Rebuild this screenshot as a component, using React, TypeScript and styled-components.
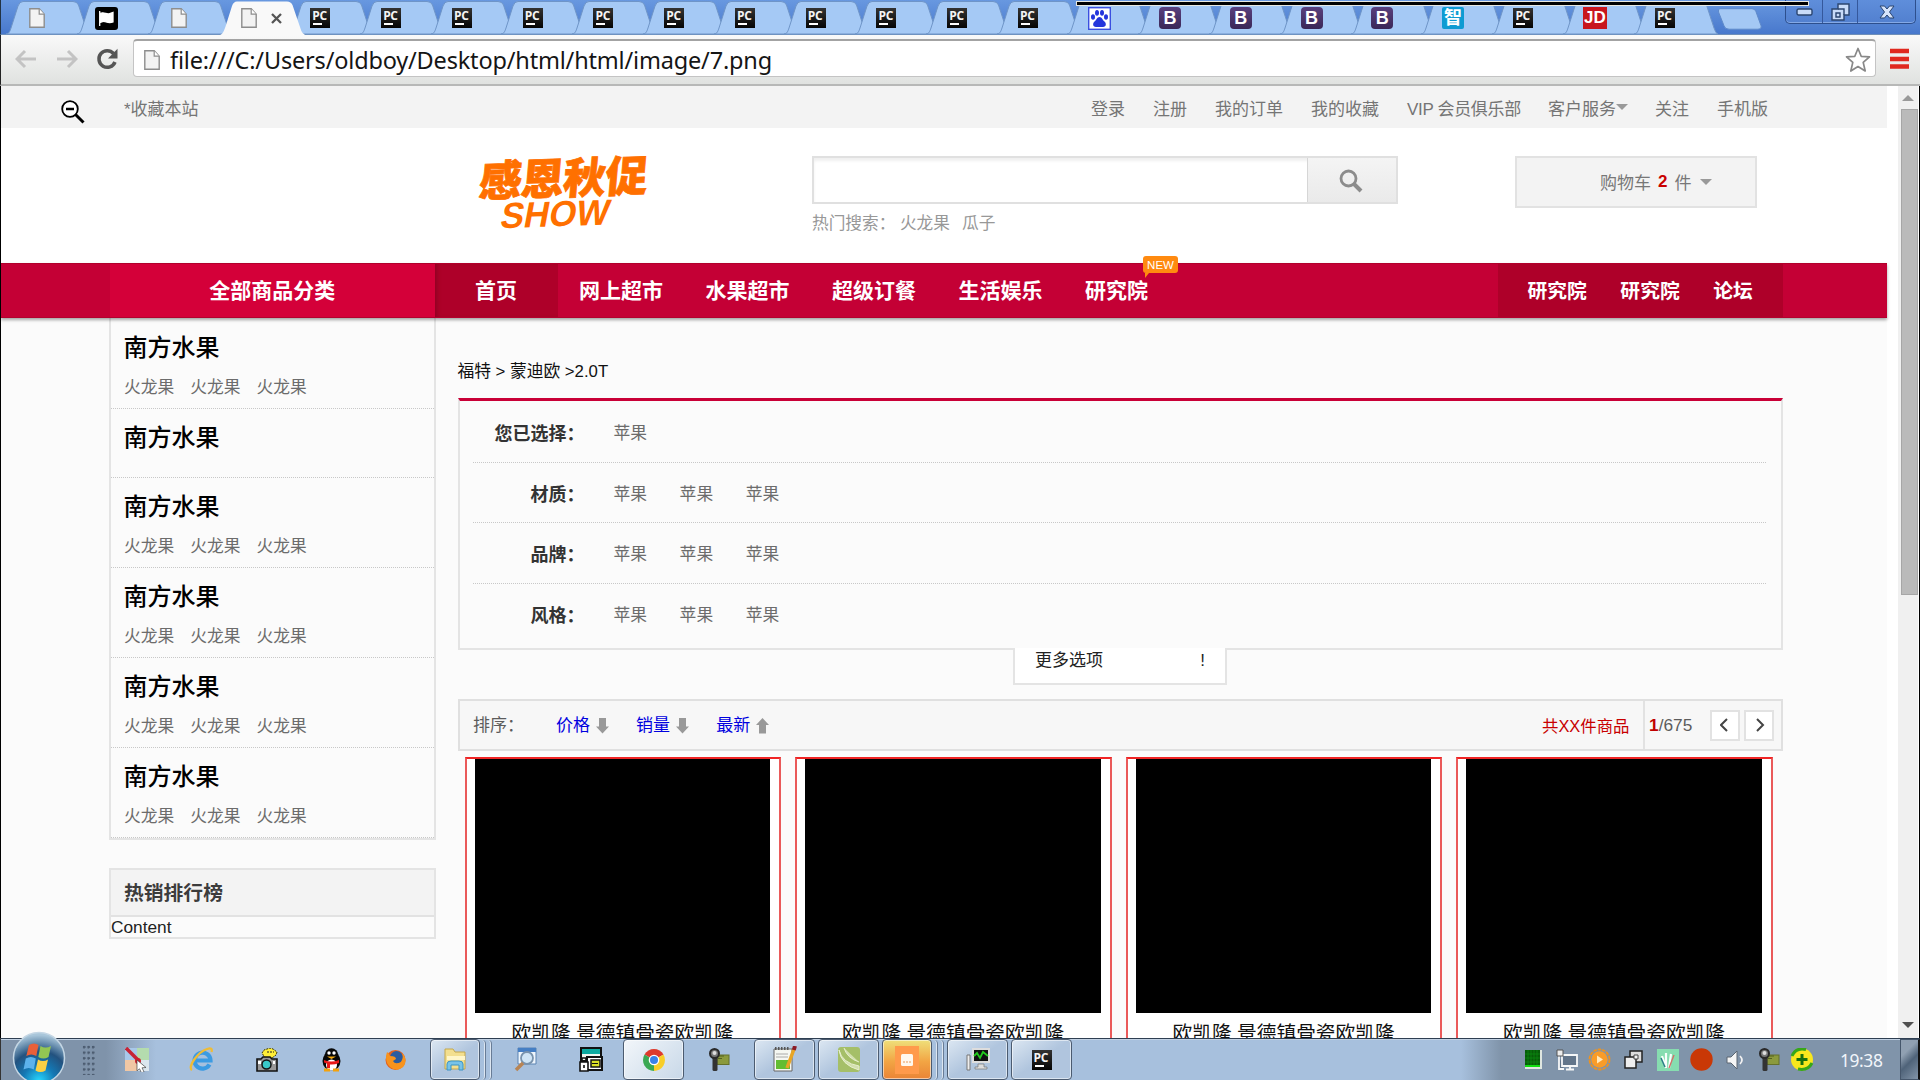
import React from "react";
import styled, { createGlobalStyle } from "styled-components";

const Global = createGlobalStyle`
  * { box-sizing: border-box; }
  body { margin: 0; overflow: hidden; background: #fff; }
  body, button, input { font-family: "Liberation Sans", "Noto Sans CJK SC", sans-serif; }
`;

const Screen = styled.div`
  width: 1920px;
  height: 1080px;
  display: flex;
  flex-direction: column;
  overflow: hidden;
  position: relative;
`;

/* ---------- browser chrome ---------- */

const TabStrip = styled.div`
  position: relative;
  height: 35px;
  flex: none;
  display: flex;
  align-items: flex-start;
  padding-left: 6px;
  background: linear-gradient(#6898e0, #4878cc);
  border-left: 1px solid #234;
  border-bottom: 1px solid #6f8fb8;
`;

const Tab = styled.div<{ $active?: boolean; $inset: number }>`
  position: relative;
  width: 70.78px;
  height: 35px;
  flex: none;
  display: flex;
  align-items: center;
  gap: 14px;
  padding: 1px 0 0 ${(p) => p.$inset}px;
  z-index: ${(p) => (p.$active ? 3 : 1)};
`;

const TabShape = styled.svg`
  position: absolute;
  left: 0;
  top: 0;
  overflow: visible;
  z-index: -1;
`;

const NewTab = styled.svg`
  margin: 8px 0 0 12px;
  flex: none;
`;

const Recording = styled.div`
  position: absolute;
  left: 1075px;
  top: 1px;
  width: 733px;
  height: 5px;
  background: #000;
  border: 1px solid #e8e8e0;
  z-index: 6;
`;

const WindowControls = styled.div`
  position: absolute;
  right: 4px;
  top: 0;
  height: 24px;
  display: grid;
  grid-template-columns: 36px 35px 58px;
  border: 1px solid #2d4f8d;
  border-top: 0;
  border-radius: 0 0 5px 5px;
  background: linear-gradient(#5f8edb, #5280cf);
  box-shadow: inset 0 -1px #84a9e6;
`;

const WindowButton = styled.div`
  display: flex;
  align-items: center;
  justify-content: center;
  & + & { border-left: 1px solid #35589c; }
`;

const Favicon = styled.span<{ $bg: string; $fg?: string; $size?: number; $round?: number; $w?: number }>`
  width: ${(p) => p.$w ?? 22}px;
  height: 22px;
  flex: none;
  display: flex;
  align-items: center;
  justify-content: center;
  border-radius: ${(p) => p.$round ?? 0}px;
  background: ${(p) => p.$bg};
  color: ${(p) => p.$fg ?? "#fff"};
  font: bold ${(p) => p.$size ?? 18}px/22px "Liberation Sans", "Noto Sans CJK SC", sans-serif;
`;

const PcBadge = styled.span`
  width: 20px;
  height: 20px;
  flex: none;
  display: flex;
  flex-direction: column;
  padding: 1px 0 0 2px;
  background: linear-gradient(#333, #050505);
  color: #f4f4f4;
  font: bold 12px/13px "Open Sans", sans-serif;
  letter-spacing: -0.3px;
  &::after {
    content: "";
    width: 9px;
    height: 2px;
    margin: 1px 0 0 1px;
    background: #fff;
  }
`;

const Toolbar = styled.div`
  height: 51px;
  flex: none;
  display: flex;
  align-items: center;
  padding: 0 11px 3px 14px;
  background: linear-gradient(#f9f9f9, #e0e2e0);
  border-left: 1px solid #222;
  border-bottom: 2px solid #b7b8b7;
`;

const ToolIcon = styled.svg<{ $gap: number }>`
  flex: none;
  margin: 2px ${(p) => p.$gap}px 0 0;
`;

const AddressBar = styled.div`
  height: 38px;
  flex: 1;
  display: flex;
  align-items: center;
  padding: 2px 4px 0 10px;
  background: #fff;
  border: 1px solid #c4c4c4;
  border-top: 2px solid #a3a3a3;
  border-radius: 4px;
`;

const Url = styled.span`
  flex: 1;
  margin-left: 10px;
  color: #151515;
  font: 23.5px/34px "Noto Sans", "Open Sans", sans-serif;
  letter-spacing: -0.18px;
  white-space: nowrap;
`;

const MenuIcon = styled.svg`
  margin-top: 2px;
`;

/* ---------- viewport ---------- */

const Viewport = styled.div`
  height: 952px;
  flex: none;
  display: flex;
  overflow: hidden;
  border-left: 1px solid #000;
  border-right: 1px solid #000;
  background: #fff;
`;

const Page = styled.div`
  width: 1886px;
  margin-right: 11px;
  flex: none;
  background: #fbfbfb;
  color: #666;
`;

const ScrollBar = styled.div`
  width: 20px;
  display: flex;
  flex-direction: column;
  align-items: center;
  padding: 9px 0 10px;
  background: #f0f0f0;
`;

const Thumb = styled.div`
  width: 17px;
  height: 486px;
  margin: 8px 0 auto 2px;
  background: #bababa;
  border: 1px solid #a6a6a6;
`;

const Caret = styled.span<{ $up?: boolean; $color?: string }>`
  display: inline-block;
  border: solid transparent;
  border-width: 0 6px;
  ${(p) => (p.$up ? "border-bottom" : "border-top")}: 6px solid ${(p) => p.$color ?? "#999"};
`;

const TopBar = styled.div`
  height: 42px;
  display: flex;
  align-items: center;
  padding: 5px 119px 0 60px;
  background: #f3f3f3;
  color: #757575;
  font-size: 17px;
  line-height: 20px;
`;

const ZoomCursor = styled.svg`
  flex: none;
  margin: 4px 39px 0 0;
`;

const TopLinks = styled.nav`
  margin-left: auto;
  display: flex;
  gap: 28px;
`;

const TopLink = styled.span`
  display: flex;
  align-items: flex-start;
  white-space: nowrap;
  ${Caret} { margin: 4px -1px 0 0; }
`;

const Vip = styled(TopLink)`
  width: 113px;
  letter-spacing: -0.33px;
`;

const Header = styled.header`
  height: 135px;
  display: flex;
  align-items: flex-start;
  padding: 28px 130px 0 477px;
  background: #fff;
`;

const Promo = styled.div`
  width: 172px;
  height: 76px;
  transform: rotate(-2deg) skewX(-7deg);
  color: #ff7000;
  font-weight: 900;
  white-space: nowrap;
  -webkit-text-stroke: 0.8px #ff7000;
`;

const PromoTitle = styled.div`
  font-size: 42.5px;
  line-height: 44px;
  margin-top: 2px;
  letter-spacing: -0.4px;
`;

const PromoShow = styled.div`
  display: inline-block;
  margin: -3px 0 0 25px;
  font: bold 36px/29px "Liberation Sans", sans-serif;
  transform: scaleX(0.97) skewX(-6deg);
  transform-origin: left;
  -webkit-text-stroke: 0;
`;

const SearchArea = styled.div`
  width: 586px;
  margin-left: 162px;
`;

const SearchBox = styled.div`
  height: 48px;
  display: grid;
  grid-template-columns: 1fr 89px;
  border: 2px solid #e0e0e0;
  box-shadow: inset 0 3px 3px #f0f0f0;
`;

const SearchButton = styled.div`
  display: flex;
  align-items: center;
  justify-content: center;
  padding: 2px 2px 0 0;
  border-left: 1px solid #d6d6d6;
  background: linear-gradient(#f4f4f4, #eaeaea);
`;

const HotWords = styled.div`
  display: flex;
  gap: 12px;
  margin-top: 10px;
  color: #989898;
  font-size: 16.7px;
  line-height: 20px;
  span:first-child { margin-right: -7.5px; }
`;

const Cart = styled.div`
  width: 242px;
  height: 52px;
  margin-left: auto;
  display: flex;
  align-items: center;
  gap: 7px;
  padding: 0 0 1px 83px;
  background: #f3f3f3;
  border: 2px solid #e2e2e2;
  color: #777;
  font-size: 17px;
  b { color: #c90000; }
  ${Caret} { margin-left: 2px; }
`;

const Nav = styled.nav`
  position: relative;
  z-index: 2;
  height: 55px;
  display: flex;
  padding: 0 104px 0 109px;
  background: #c40035;
  color: #fff;
  font-size: 21px;
  line-height: 54px;
  font-weight: 700;
  border-top: 1px solid #b1002b;
  border-bottom: 1px solid #b3002e;
  box-shadow: 0 2px 3px rgba(0, 0, 0, 0.35);
`;

const NavAll = styled.div`
  width: 324.5px;
  text-align: center;
  background: #d40039;
`;

const NavHome = styled.div`
  width: 123px;
  padding-left: 40.5px;
  background: #ae0029;
  box-shadow: inset 4px 0 4px -2px #8f0022;
`;

const NavLinks = styled.div`
  display: flex;
  gap: 42.5px;
  margin-left: 21.5px;
`;

const NavLink = styled.span`
  position: relative;
`;

const NewTag = styled.span`
  position: absolute;
  left: 58px;
  top: -8px;
  width: 35px;
  height: 17px;
  border-radius: 3px;
  background: #ff8a10;
  color: #fff;
  font: 11.5px/18px "Liberation Sans", sans-serif;
  text-align: center;
  &::after {
    content: "";
    position: absolute;
    left: 2px;
    bottom: -5px;
    border: solid transparent;
    border-width: 5px 4px 0 0;
    border-top-color: #ff8a10;
  }
`;

const NavRight = styled.div`
  width: 285px;
  margin-left: auto;
  display: flex;
  gap: 33.5px;
  padding-left: 29.5px;
  background: #ae0029;
  font-size: 19.8px;
`;

const Body = styled.div`
  display: flex;
  align-items: flex-start;
  padding: 0 104px 0 108px;
`;

const Sidebar = styled.aside`
  width: 327px;
  flex: none;
`;

const Categories = styled.div`
  height: 522px;
  padding-top: 1px;
  border: 2px solid #e4e4e4;
  border-top: 0;
`;

const Category = styled.section<{ $short?: boolean }>`
  height: ${(p) => (p.$short ? 69 : 90)}px;
  padding: 14px 0 0 12.5px;
  border-bottom: 1px dotted #c8c8c8;
`;

const CategoryTitle = styled.div`
  color: #000;
  font-size: 24px;
  line-height: 30px;
  font-weight: 500;
`;

const CategoryItems = styled.div`
  display: flex;
  gap: 15.9px;
  margin: 15px 0 0 0.5px;
  color: #6c6c6c;
  font-size: 16.8px;
  line-height: 20px;
`;

const HotList = styled.section`
  height: 71px;
  margin-top: 28px;
  border: 2px solid #e4e4e4;
`;

const HotTitle = styled.div`
  height: 47px;
  padding-left: 13px;
  background: #f3f3f3;
  border-bottom: 2px solid #e2e2e2;
  color: #3c3c3c;
  font-size: 19.8px;
  line-height: 47px;
  font-weight: 700;
`;

const HotBody = styled.div`
  color: #222;
  font-size: 17.3px;
  line-height: 20px;
`;

const Main = styled.main`
  width: 1326px;
  margin-left: 22px;
`;

const Crumbs = styled.div`
  display: flex;
  align-items: center;
  gap: 4.5px;
  height: 80px;
  margin-left: -0.5px;
  padding-top: 28px;
  color: #111;
  font-size: 16.8px;
  line-height: 20px;
`;

const Filters = styled.section`
  height: 252px;
  padding: 0 15px 0 13px;
  border: 2px solid #e4e4e4;
  border-top: 3px solid #c90037;
`;

const FilterRow = styled.div`
  display: flex;
  height: 60.5px;
  padding-top: 22px;
  line-height: 20px;
  color: #6c6c6c;
  font-size: 16.8px;
  &:first-child { padding-top: 23px; }
  & + & { border-top: 1px dotted #c8c8c8; }
`;

const FilterLabel = styled.b`
  width: 111.5px;
  margin-right: 29px;
  text-align: right;
  color: #333;
  font-size: 18px;
  font-weight: 700;
`;

const FilterValue = styled.span`
  width: 66.1px;
`;

const More = styled.div`
  position: relative;
  z-index: 1;
  width: 214px;
  height: 37px;
  margin: -2px 0 14px 555px;
  display: flex;
  justify-content: space-between;
  padding: 3px 20px 0 20px;
  background: #fff;
  border: 2px solid #e4e4e4;
  border-top: 0;
  color: #222;
  font-size: 17px;
  line-height: 20px;
`;

const SortBar = styled.div`
  height: 52px;
  display: flex;
  align-items: center;
  padding: 0 7px 0 13px;
  background: #f7f7f7;
  border: 2px solid #e0e0e0;
  color: #5c5c5c;
  font-size: 17px;
  line-height: 20px;
`;

const SortLabel = styled.span`
  width: 83px;
  padding-top: 2px;
`;

const SortKey = styled.span`
  width: 80.1px;
  display: flex;
  align-items: center;
  gap: 6px;
  padding-top: 2px;
  color: #0000df;
`;

const Total = styled.span`
  width: 101px;
  margin-left: auto;
  padding-top: 1px;
  color: #c80000;
  font-size: 16.4px;
`;

const PageCount = styled.span`
  width: 63px;
  height: 100%;
  padding-left: 4px;
  border-left: 2px solid #e2e2e2;
  line-height: 48px;
  font-size: 17.3px;
  b { color: #c00000; }
`;

const Pager = styled.span`
  width: 30px;
  height: 31px;
  margin-left: 4px;
  display: flex;
  align-items: center;
  justify-content: center;
  background: #fff;
  border: 2px solid #e2e2e2;
`;

const Products = styled.div`
  display: flex;
  gap: 14.3px;
  margin: 7px 0 0 7px;
`;

const Product = styled.article`
  width: 316.2px;
  height: 300px;
  flex: none;
  border: 2px solid #ea5a5a;
  border-top-color: #f02424;
  margin-top: -1px;
  padding: 0 9px 0 8px;
  background: #fff;
  color: #111;
  font-size: 19.7px;
  line-height: 32px;
  text-align: center;
  white-space: nowrap;
`;

const Photo = styled.div`
  height: 254px;
  margin-bottom: 4px;
  background: #000;
`;

/* ---------- taskbar ---------- */

const TaskBar = styled.footer`
  position: relative;
  height: 42px;
  flex: none;
  display: flex;
  align-items: center;
  background: linear-gradient(90deg, #7f93aa 0 105px, #a7c0dd 155px 1460px, #8094aa 1500px);
  border-top: 1px solid #2f3f52;
  border-left: 1px solid #333;
  box-shadow: inset 0 1px #c2d2e4;
`;

const Orb = styled.svg`
  position: absolute;
  left: 11px;
  top: -8px;
`;

const Slot = styled.div<{ $w: number }>`
  width: ${(p) => p.$w}px;
  height: 41px;
  flex: none;
  display: flex;
  align-items: center;
  justify-content: center;
`;

const TaskButton = styled(Slot)<{ $tone?: "orange" | "light"; $before?: number }>`
  height: 41px;
  margin: 0 0 0 ${(p) => p.$before ?? 3}px;
  border: 1.5px solid #4b5b70;
  border-radius: 4px;
  box-shadow: inset 0 0 0 1px rgba(255, 255, 255, 0.55);
  background: ${(p) =>
    p.$tone === "orange"
      ? "linear-gradient(#efe07a, #f2a544 55%, #ea8436)"
      : p.$tone === "light"
        ? "linear-gradient(135deg, #f2f6fa, #c8d8e8)"
        : "linear-gradient(145deg, #dce7f2, #b0c5de 50%)"};
`;

const Stack = styled.span`
  width: 6px;
  height: 40px;
  border-right: 1px solid #687c96;
  box-shadow: inset -1px 0 rgba(255, 255, 255, 0.6);
  border-radius: 0 4px 4px 0;
`;

const Grip = styled.div`
  width: 13px;
  height: 30px;
  margin-left: 81px;
  background: radial-gradient(circle at 2px 2px, #4c5c70 1.2px, transparent 1.6px) 0 0 / 4.5px 5.6px;
`;

const Tray = styled.div`
  margin-left: auto;
  display: flex;
  align-items: center;
`;

const Clock = styled.span`
  width: 78px;
  padding-left: 18px;
  color: #f2f6fa;
  font: 17.4px/24px "Noto Sans", sans-serif;
  letter-spacing: -0.4px;
`;

const ShowDesktop = styled.div`
  width: 20px;
  height: 41px;
  border: 1.5px solid #45566b;
  border-right: 2px solid #111;
  background: linear-gradient(135deg, #90a0b2 30%, #4f6379 55%, #8395a9);
`;

/* ---------- drawings ---------- */

const PageIcon = () => (
  <svg width="16" height="20" viewBox="0 0 16 20">
    <path d="M.8.8h9.4l5 5.4v13H.8z" fill="#f3f3f3" stroke="#8d8d8d" strokeWidth="1.4" />
    <path d="M10.2.8v5.4h5" fill="#fff" stroke="#8d8d8d" strokeWidth="1.2" />
  </svg>
);

const FlagIcon = () => (
  <svg width="23" height="23" viewBox="0 0 23 23">
    <rect width="23" height="23" rx="3" fill="#000" />
    <path d="M4.700 4v15M5 6.500c4-2 6 1 9 .3l4-1.300v9.500c-5 2-7-1-10-.500l-3 1z" fill="#fff" stroke="#fff" strokeWidth="1.300" />
  </svg>
);

const PawIcon = () => (
  <svg width="23" height="23" viewBox="0 0 23 23">
    <rect x=".7" y=".7" width="21.600" height="21.600" fill="#fff" stroke="#3b4fe0" strokeWidth="1.4" />
    <g fill="#2436dc">
      <ellipse cx="5" cy="10" rx="2" ry="2.800" />
      <ellipse cx="9" cy="5.800" rx="2" ry="2.900" />
      <ellipse cx="14" cy="5.800" rx="2" ry="2.900" />
      <ellipse cx="18" cy="10" rx="2" ry="2.800" />
      <path d="M11.500 10c2.500 0 3 3 5 4.500s2 5.500-1.500 5.500h-7c-3.500 0-3.500-4-1.500-5.500s2.500-4.500 5-4.500z" />
    </g>
  </svg>
);

const RecorderIcon = () => (
  <svg width="22" height="24" viewBox="0 0 22 24">
    <rect x="9" y="7" width="12" height="9.500" fill="#8b9a3d" stroke="#65712c" />
    <path d="M10 8h6M10 10.500h4" stroke="#556022" />
    <rect x="4.500" y="8" width="5" height="15" rx="1.500" fill="#333" />
    <circle cx="6.500" cy="5.500" r="4.500" fill="#777" stroke="#292929" strokeWidth="2" />
    <circle cx="6.500" cy="5" r="2" fill="#ddd" />
  </svg>
);

const Arrow = ({ up }: { up?: boolean }) => (
  <svg width="13" height="16" viewBox="0 0 13 16">
    <path d={up ? "M6.500 0l6.500 7h-3v8.500h-7V7H0z" : "M3 0h7v8.500h3l-6.500 7-6.500-7h3z"} fill="#999" />
  </svg>
);

const Chevron = ({ right }: { right?: boolean }) => (
  <svg width="11" height="14" viewBox={right ? "-1 0 11 14" : "1 0 11 14"}>
    <path d={right ? "M2 1l6 6-6 6" : "M8 1L2 7l6 6"} fill="none" stroke="#444" strokeWidth="2" />
  </svg>
);

type TabKind = "page" | "flag" | "active" | "pc" | "paw" | "b" | "zhi" | "jd";

const tabs: TabKind[] = [
  "page", "flag", "page", "active",
  "pc", "pc", "pc", "pc", "pc", "pc", "pc", "pc", "pc", "pc", "pc",
  "paw", "b", "b", "b", "b", "zhi", "pc", "jd", "pc",
];

const insets: Record<TabKind, number> = {
  page: 22, active: 22, flag: 17.5, pc: 20.3, paw: 19.5, b: 19.8, zhi: 19.8, jd: 19,
};

const TabIcon = ({ kind }: { kind: TabKind }) => {
  switch (kind) {
    case "flag": return <FlagIcon />;
    case "paw": return <PawIcon />;
    case "b": return <Favicon $bg="linear-gradient(#59407e,#3a2757)" $round={4}>B</Favicon>;
    case "zhi": return <Favicon $bg="#0e9bd2" $round={2} $size={18}>智</Favicon>;
    case "jd": return <Favicon $bg="#c8161d" $size={17} $w={24}>JD</Favicon>;
    case "pc": return <PcBadge>PC</PcBadge>;
    default: return <PageIcon />;
  }
};

const BrowserTab = ({ kind }: { kind: TabKind }) => {
  const active = kind === "active";
  return (
    <Tab $active={active} $inset={insets[kind]}>
      <TabShape width="84" height="35">
        <path
          d={active
            ? "M-1 35.500C4 35 5 31 7 25L13 6Q14.500 1.500 18 1.500H68Q72 1.500 73.500 5L81 27Q83 35 88 35.500Z"
            : "M-1 34C2 34 3 31 4 28L11 6Q12.500 1.500 16 1.500H66Q70 1.500 71.500 5L79 28Q81 34 83 34Z"}
          fill={active ? "#f9f9f9" : "#a5c9f5"}
          stroke={active ? "none" : "#6f95c8"}
          strokeWidth="1"
        />
      </TabShape>
      <TabIcon kind={kind} />
      {active && (
        <svg width="11" height="11" viewBox="0 0 11 11">
          <path d="M1 1l9 9M10 1l-9 9" stroke="#555" strokeWidth="2.300" />
        </svg>
      )}
    </Tab>
  );
};

const categories = [true, false, true, true, true, true];
const filters = [
  { label: "您已选择：", values: 1 },
  { label: "材质：", values: 3 },
  { label: "品牌：", values: 3 },
  { label: "风格：", values: 3 },
];
const repeat = (n: number) => Array.from({ length: n }, (_, i) => i);

const Chrome = () => (
  <>
    <TabStrip>
      {tabs.map((kind, i) => <BrowserTab key={i} kind={kind} />)}
      <NewTab width="46" height="22" viewBox="0 0 46 22">
        <path d="M3 .7h32q3 0 4 3l5 14q1 3-3 3.500H12q-4 0-5-3.500L1.500 4Q.8.700 3 .7z" fill="#a4c8f4" stroke="#5f8aca" />
      </NewTab>
      <WindowControls>
        <WindowButton>
          <svg width="17" height="8"><rect x="1" y="1" width="15" height="6" rx="1.500" fill="#c8dbf8" stroke="#2b456f" strokeWidth="1.400" /></svg>
        </WindowButton>
        <WindowButton>
          <svg width="19" height="18" viewBox="0 0 19 18">
            <path d="M7 1h11v11h-5v5H1V6h6z" fill="#c8dbf8" stroke="#2b456f" strokeWidth="1.400" />
            <path d="M7 6h6v6M5 10h4v4H5z" fill="none" stroke="#2b456f" strokeWidth="1.400" />
          </svg>
        </WindowButton>
        <WindowButton>
          <svg width="16" height="14" viewBox="0 0 16 14">
            <path d="M1 1h4.500L8 4l2.500-3H15l-4.500 6 4.500 6h-4.500L8 10l-2.500 3H1l4.500-6z" fill="#d6e3fa" stroke="#2b456f" />
          </svg>
        </WindowButton>
      </WindowControls>
      <Recording />
    </TabStrip>
    <Toolbar>
      <ToolIcon $gap={19} width="22" height="20" viewBox="0 0 22 20"><path d="M21 10H3M10 2L2 10l8 8" fill="none" stroke="#c3c3c3" strokeWidth="3" /></ToolIcon>
      <ToolIcon $gap={18} width="22" height="20" viewBox="0 0 22 20"><path d="M1 10h18M12 2l8 8-8 8" fill="none" stroke="#c3c3c3" strokeWidth="3" /></ToolIcon>
      <ToolIcon $gap={15} width="22" height="22" viewBox="0 0 22 22">
        <path d="M17.500 5.500A8.300 8.300 0 1 0 19 14" fill="none" stroke="#555" strokeWidth="3.500" />
        <path d="M21.500.8v9.700H12z" fill="#555" />
      </ToolIcon>
      <AddressBar>
        <PageIcon />
        <Url>file:///C:/Users/oldboy/Desktop/html/html/image/7.png</Url>
        <svg width="26" height="26" viewBox="0 0 26 26">
          <path d="M13 1.500l3.200 7.800 8.300.6-6.300 5.500 2 8.600L13 19.500 5.800 24l2-8.600L1.500 9.900l8.300-.6z" fill="#fff" stroke="#888" strokeWidth="1.700" strokeLinejoin="round" />
        </svg>
      </AddressBar>
      <MenuIcon width="33" height="22" viewBox="0 0 33 22">
        <path d="M14 3h19M14 11h19M14 18.500h19" stroke="#e0291f" strokeWidth="4.400" />
      </MenuIcon>
    </Toolbar>
  </>
);

const Site = () => (
  <Page>
    <TopBar>
      <ZoomCursor width="24" height="24" viewBox="0 0 24 24">
        <circle cx="9" cy="9" r="7.800" fill="#fff" stroke="#000" strokeWidth="1.800" />
        <path d="M5 9h8" stroke="#000" strokeWidth="2.500" />
        <path d="M14.500 14.500l8 8" stroke="#000" strokeWidth="3" />
      </ZoomCursor>
      <span>*收藏本站</span>
      <TopLinks>
        <TopLink>登录</TopLink>
        <TopLink>注册</TopLink>
        <TopLink>我的订单</TopLink>
        <TopLink>我的收藏</TopLink>
        <Vip>VIP 会员俱乐部</Vip>
        <TopLink>客户服务<Caret /></TopLink>
        <TopLink>关注</TopLink>
        <TopLink>手机版</TopLink>
      </TopLinks>
    </TopBar>
    <Header>
      <Promo>
        <PromoTitle>感恩秋促</PromoTitle>
        <PromoShow>SHOW</PromoShow>
      </Promo>
      <SearchArea>
        <SearchBox>
          <span />
          <SearchButton>
            <svg width="24" height="24" viewBox="0 0 24 24">
              <circle cx="9.500" cy="9.500" r="7.500" fill="none" stroke="#8c8c8c" strokeWidth="2.800" />
              <path d="M14.500 14.500l7.500 7.500" stroke="#8c8c8c" strokeWidth="4" />
            </svg>
          </SearchButton>
        </SearchBox>
        <HotWords><span>热门搜索：</span><span>火龙果</span><span>瓜子</span></HotWords>
      </SearchArea>
      <Cart><span>购物车</span><b>2</b><span>件</span><Caret /></Cart>
    </Header>
    <Nav>
      <NavAll>全部商品分类</NavAll>
      <NavHome>首页</NavHome>
      <NavLinks>
        <NavLink>网上超市</NavLink>
        <NavLink>水果超市</NavLink>
        <NavLink>超级订餐</NavLink>
        <NavLink>生活娱乐</NavLink>
        <NavLink>研究院<NewTag>NEW</NewTag></NavLink>
      </NavLinks>
      <NavRight><span>研究院</span><span>研究院</span><span>论坛</span></NavRight>
    </Nav>
    <Body>
      <Sidebar>
        <Categories>
          {categories.map((full, i) => (
            <Category key={i} $short={!full}>
              <CategoryTitle>南方水果</CategoryTitle>
              {full && <CategoryItems>{repeat(3).map((n) => <span key={n}>火龙果</span>)}</CategoryItems>}
            </Category>
          ))}
        </Categories>
        <HotList>
          <HotTitle>热销排行榜</HotTitle>
          <HotBody>Content</HotBody>
        </HotList>
      </Sidebar>
      <Main>
        <Crumbs><span>福特</span><span>&gt;</span><span>蒙迪欧</span><span>&gt;2.0T</span></Crumbs>
        <Filters>
          {filters.map((f) => (
            <FilterRow key={f.label}>
              <FilterLabel>{f.label}</FilterLabel>
              {repeat(f.values).map((n) => <FilterValue key={n}>苹果</FilterValue>)}
            </FilterRow>
          ))}
        </Filters>
        <More><span>更多选项</span><span>!</span></More>
        <SortBar>
          <SortLabel>排序：</SortLabel>
          <SortKey>价格<Arrow /></SortKey>
          <SortKey>销量<Arrow /></SortKey>
          <SortKey>最新<Arrow up /></SortKey>
          <Total>共XX件商品</Total>
          <PageCount><b>1</b>/675</PageCount>
          <Pager><Chevron /></Pager>
          <Pager><Chevron right /></Pager>
        </SortBar>
        <Products>
          {repeat(4).map((n) => (
            <Product key={n}><Photo />欧凯隆 景德镇骨瓷欧凯隆</Product>
          ))}
        </Products>
      </Main>
    </Body>
  </Page>
);

const Task = () => (
  <TaskBar>
    <Orb width="54" height="52" viewBox="0 0 54 52">
      <defs>
        <radialGradient id="orb" cx=".5" cy=".95" r=".9">
          <stop offset="0" stopColor="#27d8ff" />
          <stop offset=".35" stopColor="#1478b4" />
          <stop offset=".65" stopColor="#23527f" />
          <stop offset="1" stopColor="#a9c6da" />
        </radialGradient>
      </defs>
      <circle cx="27" cy="27" r="25.500" fill="url(#orb)" stroke="#c4d6e4" strokeWidth="1.500" />
      <path d="M17 14q5-3 9.500 0l-2.200 11q-5-3-10 0z" fill="#e8603a" />
      <path d="M28.500 15q5 3 10.500 0l-2.500 11q-5 3-10.200 0z" fill="#93c653" />
      <path d="M13.800 27.500q5-3 10 0l-2 11q-5-3-10.300 0z" fill="#5cb2ec" />
      <path d="M26 28.500q5 3 10 0l-2.500 11q-5 3-10 0z" fill="#fbd044" />
    </Orb>
    <Grip />
    <Slot $w={85}>
      <svg width="25" height="25" viewBox="0 0 25 25">
        <path d="M0 1h12v12H0z" fill="#a8c8ea" /><path d="M12 1h12v12H12z" fill="#b4dcae" />
        <path d="M0 13h12v11H0z" fill="#f0c7a4" /><path d="M12 13h12v11H12z" fill="#dbe6ee" />
        <path d="M1 1l12 12" stroke="#c62436" strokeWidth="3.500" /><circle cx="13" cy="14" r="3" fill="#d0202c" />
        <path d="M12 13l9 7.500-4 .3 2 4-2.500 1-2-4-2.500 2z" fill="#fff" stroke="#444" strokeWidth=".7" />
      </svg>
    </Slot>
    <Slot $w={43}>
      <svg width="25" height="25" viewBox="0 0 25 25">
        <path d="M20.500 17.500a8 8 0 1 1 1-4H6" fill="none" stroke="#3c9be2" strokeWidth="4.200" />
        <path d="M3 23C-2 20 9 5 18 2q6-2 4.500 3" fill="none" stroke="#efbc36" strokeWidth="2.300" />
      </svg>
    </Slot>
    <Slot $w={88}>
      <svg width="22" height="24" viewBox="0 0 22 24">
        <path d="M6 5l2-3 3-1 3-1 3 1 4 3-1 3-4 3H9z" fill="#ffee37" stroke="#3b3500" strokeDasharray="2 1" />
        <path d="M11 4h7" stroke="#222" strokeDasharray="2 1" />
        <path d="M1 11h4l2-2h7l2 2h5v12H1z" fill="#999" stroke="#111" strokeWidth="1.600" />
        <circle cx="10.500" cy="16.500" r="4.500" fill="#39c8c8" stroke="#111" strokeWidth="1.500" />
        <path d="M2 13h3v3H2zM17 13h2v3h-2z" fill="#fff" />
      </svg>
    </Slot>
    <Slot $w={40}>
      <svg width="23" height="24" viewBox="0 0 23 24">
        <ellipse cx="11.500" cy="13" rx="9" ry="9.500" fill="#080808" />
        <circle cx="11.500" cy="7" r="6.700" fill="#080808" />
        <ellipse cx="11.500" cy="17" rx="5.500" ry="5.500" fill="#fff" />
        <circle cx="9" cy="5" r="1.700" fill="#fff" /><circle cx="14" cy="5" r="1.700" fill="#fff" />
        <path d="M7 8.500h9l-4.500 2.500z" fill="#f8aa0b" />
        <path d="M4 12q7 3 15 0v3q-5 2-9 1.500V20H7v-4.500l-3-1z" fill="#e81818" />
        <path d="M4 22h6M13 22h6" stroke="#f3a10b" strokeWidth="3" />
      </svg>
    </Slot>
    <Slot $w={88}>
      <svg width="23" height="24" viewBox="0 0 23 24">
        <circle cx="11.500" cy="12" r="10" fill="#e6601b" />
        <circle cx="12.500" cy="9.500" r="6.500" fill="#2a5ca0" />
        <path d="M3 4q2 1 3 4 6 0 6 3l-3 2q2 4 8 1 3-4 1-9 6 6 2 13-7 7-14 1Q0 13 3 4z" fill="#f7931d" />
      </svg>
    </Slot>
    <TaskButton $w={50} $before={-9}>
      <svg width="24" height="25" viewBox="0 0 24 25">
        <path d="M2 2h8l2 3h10v17H2z" fill="#f3df8f" stroke="#c4a84c" />
        <path d="M4 9h18v4H4z" fill="#fff6c9" />
        <path d="M4 23v-6q0-3 4-3h8q4 0 4 3v6h-4v-5H8v5z" fill="#78c3e8" stroke="#3c94c4" />
      </svg>
    </TaskButton>
    <Stack /><Stack />
    <Slot $w={67}>
      <svg width="24" height="25" viewBox="0 0 24 25">
        <path d="M4 1h18v16H4z" fill="#eff6fc" stroke="#5a83b2" /><path d="M4 1h18v4H4z" fill="#467fc4" />
        <circle cx="13" cy="11" r="6" fill="#cfe5f6" stroke="#7993ad" strokeWidth="1.800" />
        <path d="M9 16l-7 7" stroke="#b88454" strokeWidth="3.500" />
      </svg>
    </Slot>
    <Slot $w={63}>
      <svg width="24" height="25" viewBox="0 0 24 25">
        <path d="M2 1h20v13H2z" fill="#edf5ee" stroke="#111" strokeWidth="2" /><path d="M3 2h18v5H3z" fill="#0caaa0" />
        <path d="M8 10h15v13H8z" fill="#fff" stroke="#111" strokeWidth="2" /><path d="M12 13h9v7h-9z" fill="#d9df28" stroke="#111" strokeWidth="1.500" /><path d="M13 16.500h6" stroke="#111" />
        <path d="M1 15h8v9H1z" fill="#fff" stroke="#111" strokeWidth="1.600" /><path d="M3 15v-4h4v4M5 18v3" fill="none" stroke="#111" strokeWidth="1.600" />
      </svg>
    </Slot>
    <TaskButton $w={61} $before={1} $tone="light">
      <svg width="24" height="24" viewBox="0 0 24 24">
        <path d="M12 12L2.500 6.500A11 11 0 0 1 21.500 6.500z" fill="#dd3a2c" />
        <path d="M12 12l9.500-5.500A11 11 0 0 1 12 23z" fill="#f8ce28" />
        <path d="M12 12v11A11 11 0 0 1 2.500 6.500z" fill="#3aa853" />
        <circle cx="12" cy="12" r="5.300" fill="#fff" /><circle cx="12" cy="12" r="4" fill="#3982e8" />
      </svg>
    </TaskButton>
    <Slot $w={70}><RecorderIcon /></Slot>
    <TaskButton $w={61} $before={0}>
      <svg width="24" height="27" viewBox="0 0 24 27">
        <path d="M1 3h18v22H1z" fill="#f5f7f2" stroke="#666" /><path d="M3 14h14v9H3z" fill="#63bd31" />
        <path d="M2 2.500h15" stroke="#555" strokeWidth="3" strokeDasharray="1.500 1.500" />
        <path d="M3 8h12M3 11h12" stroke="#aaa" /><path d="M21 3l-7 19" stroke="#e7a525" strokeWidth="3.500" /><path d="M22 0l-1.200 4" stroke="#8b1c28" strokeWidth="4" />
      </svg>
    </TaskButton>
    <TaskButton $w={61}>
      <svg width="22" height="25" viewBox="0 0 22 25">
        <rect width="22" height="25" rx="3" fill="#a5bf68" />
        <path d="M1 3q3 13 20 16v4Q3 18 1 3zM6 1q3 10 15 14" fill="#d3e0ae" stroke="#e7efcf" strokeWidth="1" />
      </svg>
    </TaskButton>
    <TaskButton $w={50} $tone="orange">
      <svg width="24" height="28" viewBox="0 0 24 28">
        <rect width="24" height="28" fill="#ff9a4b" /><rect x="6" y="8" width="12" height="12" rx="1.500" fill="#fff8ed" />
        <path d="M8 16h2M11 16h2M14 16h2" stroke="#e99a59" />
      </svg>
    </TaskButton>
    <Stack /><Stack />
    <TaskButton $w={61}>
      <svg width="24" height="25" viewBox="0 0 24 25">
        <path d="M1 8h3v15H1z" fill="#eee" stroke="#777" /><path d="M7 2h16v13H7z" fill="#111" stroke="#ddd" strokeWidth="2" />
        <path d="M8 9l3-3 3 5 3-6 5 4" stroke="#22c91d" strokeWidth="1.800" fill="none" /><path d="M12 17h6v3h3v2H9v-2h3z" fill="#ddd" stroke="#777" strokeWidth=".7" />
      </svg>
    </TaskButton>
    <TaskButton $w={61}><PcBadge>PC</PcBadge></TaskButton>
    <Tray>
      <Slot $w={39}>
        <svg width="17" height="19"><path d="M0 0h17v19H0z" fill="#dfe6e0" /><path d="M0 0h15v17H0z" fill="#075c08" /><path d="M0 16h15" stroke="#10df10" strokeWidth="2" /><path d="M3 0v15M6 0v15M9 0v15M12 0v15M0 4h15M0 8h15M0 12h15" stroke="#0c8c12" strokeWidth=".7" /></svg>
      </Slot>
      <Slot $w={27}>
        <svg width="22" height="22" viewBox="0 0 22 22"><path d="M6 6h15v11H6zM10 20.500h8M14 17v3M3 7v13h5" fill="#62758a" stroke="#f5f7f8" strokeWidth="1.800" /><path d="M1 1h6v6H1z" fill="#eee" stroke="#555" /></svg>
      </Slot>
      <Slot $w={39}>
        <svg width="23" height="23" viewBox="0 0 23 23"><circle cx="11.500" cy="11.500" r="10" fill="none" stroke="#f0931d" strokeWidth="1.800" strokeDasharray="3.500 1" /><circle cx="11.500" cy="11.500" r="8.200" fill="#f99c28" /><path d="M9 7.500l6 4-6 4z" fill="#ffe9bd" /></svg>
      </Slot>
      <Slot $w={29}>
        <svg width="20" height="20" viewBox="0 0 20 20"><path d="M6 1h12v11H6z" fill="#ddd" stroke="#222" strokeWidth="1.500" /><path d="M1 7h11v11H1z" fill="#eee" stroke="#222" strokeWidth="1.500" /><path d="M10 5h4v4h-4z" fill="#f5f5f5" stroke="#444" /></svg>
      </Slot>
      <Slot $w={39}>
        <svg width="22" height="22" viewBox="0 0 22 22"><path d="M0 0h22v22H0z" fill="#86ddb0" /><path d="M5 7l4 12M9 4v15M14 5l-2 14" stroke="#f7fffb" strokeWidth="2.200" /><path d="M4 9l4 9" stroke="#2b7d87" strokeWidth="1.500" /><path d="M17 6l-5 13" stroke="#d66d68" strokeWidth="1.300" /></svg>
      </Slot>
      <Slot $w={28}><svg width="23" height="23"><circle cx="11.500" cy="11.500" r="11.200" fill="#c93806" /></svg></Slot>
      <Slot $w={41}>
        <svg width="19" height="20" viewBox="0 0 19 20"><path d="M1 7h4l6-6v18l-6-6H1z" fill="#f5f5f5" stroke="#5a6570" /><path d="M14 6q4 4 0 8" fill="none" stroke="#f2f2f2" strokeWidth="1.700" /></svg>
      </Slot>
      <Slot $w={26}><RecorderIcon /></Slot>
      <Slot $w={40}>
        <svg width="24" height="23" viewBox="0 0 24 23"><circle cx="12" cy="11.500" r="11" fill="#f8e71d" /><path d="M2 8Q6-1 16 1.500M22 15q-4 8-14 6" stroke="#37a719" strokeWidth="3" fill="none" /><path d="M12 6v11M6.500 11.500h11" stroke="#18700e" strokeWidth="3" /></svg>
      </Slot>
      <Clock>19:38</Clock>
      <ShowDesktop />
    </Tray>
  </TaskBar>
);

export default function App() {
  return (
    <Screen>
      <Global />
      <Chrome />
      <Viewport>
        <Site />
        <ScrollBar>
          <Caret $up />
          <Thumb />
          <Caret $color="#505050" />
        </ScrollBar>
      </Viewport>
      <Task />
    </Screen>
  );
}
